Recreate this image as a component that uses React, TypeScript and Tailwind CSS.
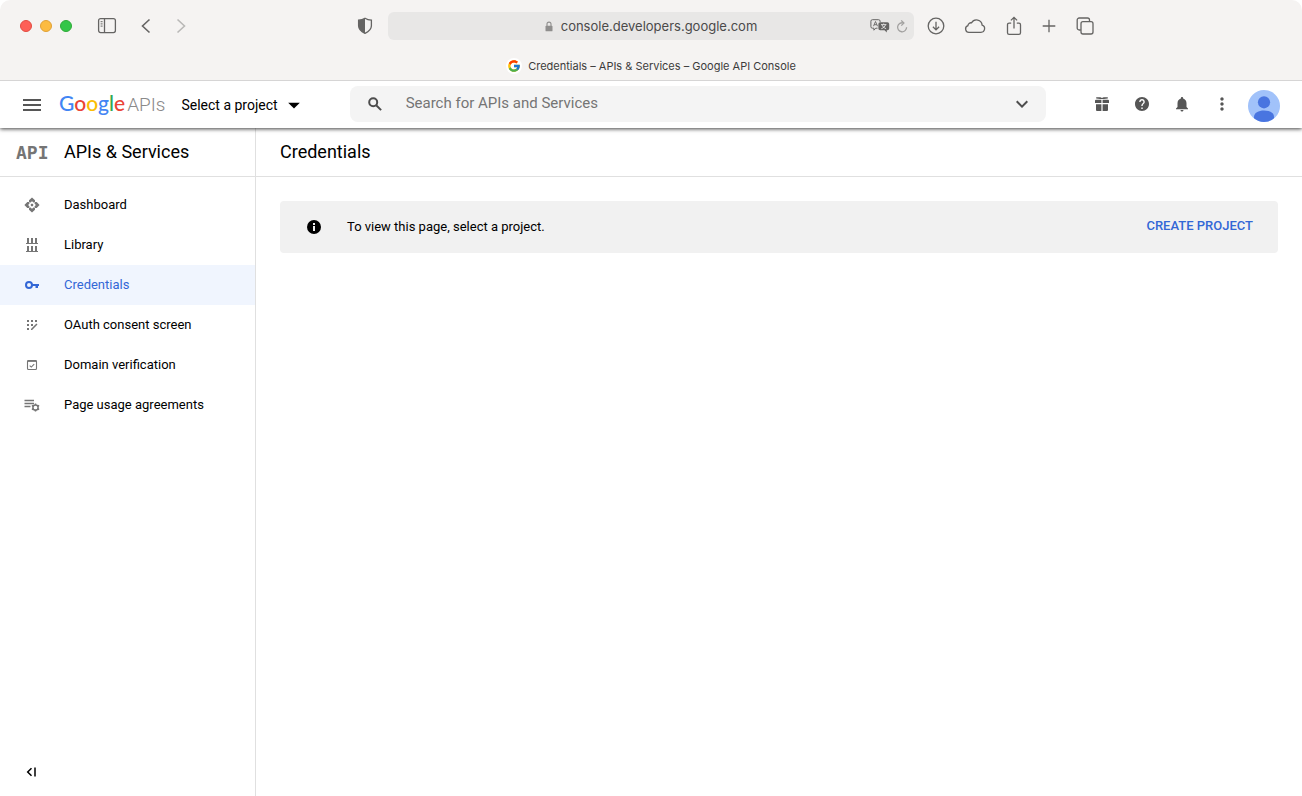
import React from "react";
import { FcGoogle } from "react-icons/fc";
import { MdArrowDropDown, MdExpandMore, MdMoreVert, MdNotifications } from "react-icons/md";

function SidebarIcon() {
  return (
    <svg width="20" height="18" viewBox="0 0 20 18" fill="none" stroke="currentColor" strokeWidth="1.3" aria-hidden="true">
      <rect x="1.6" y="1.6" width="16.8" height="14" rx="2" />
      <path d="M7.5 1.6v14" />
      <path d="M3.6 4.7h2M3.6 6.9h2M3.6 9.1h2" strokeWidth="1" />
    </svg>
  );
}

function ShieldIcon() {
  return (
    <svg width="16" height="18" viewBox="0 0 16 18" aria-hidden="true">
      <path d="M8 1.2c1.900 1.200 3.900 1.800 6.400 2v5.600c0 3.400-2.300 5.600-6.400 7.500-4.100-1.900-6.400-4.100-6.400-7.500V3.200c2.500-.2 4.500-.8 6.400-2z" fill="none" stroke="currentColor" strokeWidth="1.300" />
      <path d="M8 1.200v15.100c-4.100-1.900-6.400-4.100-6.400-7.500V3.200c2.500-.2 4.500-.8 6.400-2z" fill="currentColor" />
    </svg>
  );
}

function LockIcon() {
  return (
    <svg width="8" height="11" viewBox="0 0 8 11" aria-hidden="true">
      <rect x="0.500" y="4.700" width="7" height="5.600" rx="0.900" fill="currentColor" />
      <path d="M2 5V3.100a2 2 0 0 1 4 0V5" fill="none" stroke="currentColor" strokeWidth="1.100" />
    </svg>
  );
}

function TranslateIcon() {
  return (
    <svg width="20" height="14" viewBox="0 0 20 14" fill="none" aria-hidden="true">
      <path d="M7.500 9.200H5.800L3.900 11.200V9.200H2.400A1.500 1.500 0 0 1 .9 7.700V2.200A1.500 1.500 0 0 1 2.400.7h6.200a1.500 1.500 0 0 1 1.500 1.500v.8" stroke="currentColor" strokeWidth="1" />
      <path d="M3.500 7.200 5.500 2.500l2 4.700M4.200 5.700h2.600" stroke="currentColor" strokeWidth=".9" />
      <path d="M10.200 3.200h7.200a1.800 1.800 0 0 1 1.800 1.800v4.400a1.800 1.800 0 0 1-1.800 1.800h-.6v2.200l-2.300-2.200h-4.300a1.800 1.800 0 0 1-1.800-1.800V5a1.800 1.800 0 0 1 1.800-1.800z" fill="currentColor" />
      <path d="M11 5.600h5.400M13.700 4.500v1.100M15.500 5.700c-.5 1.900-2 3.300-4.200 4M12 5.900c.6 1.600 2 3 4.100 3.800" stroke="#e8e7e6" strokeWidth=".9" />
    </svg>
  );
}

function ReloadIcon() {
  return (
    <svg width="12" height="14" viewBox="0 0 12 14" fill="none" stroke="currentColor" strokeWidth="1.300" aria-hidden="true">
      <path d="M7.500 4A4.500 4.500 0 1 0 10.600 8.300" />
      <path d="M5.200 1.400l2.700 2.600-2.600 2.600" />
    </svg>
  );
}

function DownloadIcon() {
  return (
    <svg width="18" height="18" viewBox="0 0 18 18" fill="none" stroke="currentColor" strokeWidth="1.300" aria-hidden="true">
      <circle cx="9" cy="9" r="7.800" />
      <path d="M9 4.800v8M5.900 9.800 9 12.900l3.100-3.100" />
    </svg>
  );
}

function CloudIcon() {
  return (
    <svg width="22" height="16" viewBox="0 0 22 16" fill="none" stroke="currentColor" strokeWidth="1.300" aria-hidden="true">
      <path d="M5.300 14.300h11.500a3.700 3.700 0 0 0 1.300-7.200 5.600 5.600 0 0 0-10.500-2.300 3.100 3.100 0 0 0-3.700 2.900A3.400 3.400 0 0 0 5.300 14.300z" />
    </svg>
  );
}

function ShareIcon() {
  return (
    <svg width="16" height="20" viewBox="0 0 16 20" fill="none" stroke="currentColor" strokeWidth="1.300" aria-hidden="true">
      <path d="M5.200 7.100H3.100a1.600 1.600 0 0 0-1.600 1.600v8a1.600 1.600 0 0 0 1.600 1.600h9.800a1.600 1.600 0 0 0 1.600-1.600v-8a1.600 1.600 0 0 0-1.600-1.600h-2.100" />
      <path d="M8 12.500V1.500M4.900 4.400 8 1.300l3.100 3.100" />
    </svg>
  );
}

function PlusIcon() {
  return (
    <svg width="14" height="14" viewBox="0 0 14 14" fill="none" stroke="currentColor" strokeWidth="1.300" aria-hidden="true">
      <path d="M7 .7v12.600M.7 7h12.600" />
    </svg>
  );
}

function TabsIcon() {
  return (
    <svg width="18" height="18" viewBox="0 0 18 18" fill="none" stroke="currentColor" strokeWidth="1.300" aria-hidden="true">
      <path d="M4.800 13H3.200a2 2 0 0 1-2-2V3a2 2 0 0 1 2-2h8.300a2 2 0 0 1 2 2v1.500" />
      <rect x="5" y="4.700" width="12" height="12.300" rx="2" />
    </svg>
  );
}

function ChevronIcon({ flip }: { flip?: boolean }) {
  return (
    <svg width="10" height="16" viewBox="0 0 10 16" fill="none" stroke="currentColor" strokeWidth="1.600" aria-hidden="true">
      <path d={flip ? "M1.500 1.500 8.500 8l-7 6.500" : "M8.500 1.500 1.500 8l7 6.500"} />
    </svg>
  );
}

function SearchIcon() {
  return (
    <svg width="14" height="14" viewBox="0 0 14 14" fill="none" stroke="currentColor" strokeWidth="2" aria-hidden="true">
      <circle cx="5.200" cy="5.200" r="4" />
      <path d="M8.200 8.200l4.900 4.900" />
    </svg>
  );
}

function HelpIcon() {
  return (
    <svg width="14" height="14" viewBox="2 2 20 20" fill="currentColor" aria-hidden="true">
      <path d="M12 2C6.480 2 2 6.480 2 12s4.480 10 10 10 10-4.480 10-10S17.520 2 12 2zm1 17h-2v-2h2v2zm2.070-7.750-.9.920C13.450 12.900 13 13.500 13 15h-2v-.5c0-1.100.45-2.100 1.170-2.830l1.240-1.260c.37-.36.59-.86.59-1.410 0-1.100-.9-2-2-2s-2 .9-2 2H8c0-2.210 1.790-4 4-4s4 1.790 4 4c0 .88-.36 1.680-.93 2.250z" />
    </svg>
  );
}

function InfoIcon() {
  return (
    <svg width="14" height="14" viewBox="0 0 14 14" aria-hidden="true">
      <circle cx="7" cy="7" r="7" fill="currentColor" />
      <path d="M6 3h2v2H6zM6 6h2v5H6z" fill="#f1f1f1" />
    </svg>
  );
}

function GiftIcon() {
  return (
    <svg width="14" height="14" viewBox="0 0 14 14" fill="currentColor" aria-hidden="true">
      <path d="M1.200 0.300h4.200L7 1.100 8.600.3h4.200v1.200L8.900 1.900H5.100L1.200 1.500z" />
      <path d="M1 2.700h5.400v3.400H0V3.700a1 1 0 0 1 1-1zM7.600 2.700H13a1 1 0 0 1 1 1v2.400H7.600zM1 7.300h5.400V14H2a1 1 0 0 1-1-1zM7.600 7.300H13V13a1 1 0 0 1-1 1H7.600z" />
    </svg>
  );
}

function DashboardIcon() {
  const arm = "M8 .4l3 2.900v1.400l-1.100 1.100L8 4.200 6.100 5.800 5 4.700V3.300z";
  return (
    <svg width="16" height="16" viewBox="0 0 16 16" fill="currentColor" aria-hidden="true">
      <path d={arm} />
      <path d={arm} transform="rotate(90 8 8)" />
      <path d={arm} transform="rotate(180 8 8)" />
      <path d={arm} transform="rotate(270 8 8)" />
      <rect x="6.800" y="6.800" width="2.400" height="2.400" rx="0.600" />
    </svg>
  );
}

function LibraryIcon() {
  return (
    <svg width="12" height="14" viewBox="0 0 12 14" fill="currentColor" aria-hidden="true">
      <path d="M0 5h12v1H0zM0 13h12v1H0zM1 0h2v5H1zM5 0h2v5H5zM9 0h2v5H9zM1 8h2v5H1zM5 8h2v5H5zM9 8h2v5H9z" />
    </svg>
  );
}

function KeyIcon() {
  return (
    <svg width="14" height="8" viewBox="0 0 14 8" aria-hidden="true">
      <circle cx="4" cy="4" r="3" fill="none" stroke="currentColor" strokeWidth="2" />
      <path d="M7 3h7v2h-1v2h-2.500V5H7z" fill="currentColor" />
    </svg>
  );
}

function ConsentIcon() {
  return (
    <svg width="12" height="12" viewBox="0 0 12 12" fill="currentColor" aria-hidden="true">
      <path d="M1 1h2v2H1zM5 1h2v2H5zM9 1h2v2H9zM1 5h2v2H1zM5 5h2v2H5zM1 9h2v2H1zM5 9.900 10.400 4.500l1.100 1.100L6.100 11H5z" />
    </svg>
  );
}

function DomainIcon() {
  return (
    <svg width="12" height="12" viewBox="0 0 12 12" fill="none" stroke="currentColor" aria-hidden="true">
      <rect x="1.500" y="1.500" width="9" height="9" rx="1" strokeWidth="1.100" />
      <path d="M1.500 2h9" strokeWidth="1.800" />
      <path d="M3.700 6.600 5.300 8.100l2.900-3" strokeWidth="1.100" />
    </svg>
  );
}

function AgreementsIcon() {
  return (
    <svg width="16" height="14" viewBox="0 0 16 14" fill="none" stroke="currentColor" aria-hidden="true">
      <path d="M.5 2.500h9.500M.5 5.500h9.500M.5 8.500h6" strokeWidth="1.400" />
      <circle cx="11.500" cy="9.500" r="2.600" strokeWidth="1.500" />
      <path d="M11.500 5.400v1.500M11.500 12.100v1.500M7.900 7.400l1.400.9M13.700 10.700l1.400.9M7.900 11.600l1.400-.9M13.700 8.300l1.400-.9" strokeWidth="1.500" />
    </svg>
  );
}

function CollapseIcon() {
  return (
    <svg width="10" height="10" viewBox="0 0 10 10" fill="none" stroke="currentColor" strokeWidth="1.500" aria-hidden="true">
      <path d="M5.500 1.200 1.700 5l3.800 3.800M9 .5v9" />
    </svg>
  );
}

function Avatar() {
  return (
    <svg width="32" height="32" viewBox="0 0 32 32" aria-hidden="true">
      <circle cx="16" cy="16" r="16" fill="#a1c2fa" />
      <circle cx="16" cy="12.300" r="6.100" fill="#4975e0" />
      <path d="M6 28.300v-1.500c0-4 4.500-6.300 10-6.300s10 2.300 10 6.300v1.500A16 16 0 0 1 16 32 16 16 0 0 1 6 28.300z" fill="#4975e0" />
    </svg>
  );
}

function IconButton({ label, className, children }: { label: string; className: string; children: React.ReactNode }) {
  return (
    <button type="button" aria-label={label} className={`flex shrink-0 items-center justify-center ${className}`}>
      {children}
    </button>
  );
}

function BrowserChrome() {
  return (
    <div className="relative z-20 rounded-t-[10px] border-b border-[#d6d5d5] bg-[#f5f3f2] text-[#656463]">
      <div className="grid grid-cols-[1fr_minmax(0,526px)_1fr] items-center pt-3">
        <div className="flex items-center pl-5 pr-[15px]">
          <div className="flex gap-2">
            <button type="button" aria-label="Close" className="size-3 rounded-full border border-[#e24b41] bg-[#fe5f57]" />
            <button type="button" aria-label="Minimize" className="size-3 rounded-full border border-[#e0a136] bg-[#fcbb40]" />
            <button type="button" aria-label="Zoom" className="size-3 rounded-full border border-[#2fab38] bg-[#34c648]" />
          </div>
          <IconButton label="Show sidebar" className="ml-[23px] h-7 w-6"><SidebarIcon /></IconButton>
          <IconButton label="Back" className="ml-[15px] h-7 w-6"><ChevronIcon /></IconButton>
          <IconButton label="Forward" className="ml-[11px] h-7 w-6 text-[#b9b8b7]"><ChevronIcon flip /></IconButton>
          <IconButton label="Privacy report" className="ml-auto h-7 w-4"><ShieldIcon /></IconButton>
        </div>
        <div className="grid h-7 grid-cols-[1fr_auto_1fr] items-center rounded-md bg-[#e8e7e6]">
          <a href="https://console.developers.google.com" className="col-start-2 flex items-center gap-2 font-['Inter',sans-serif] text-[13px] leading-5 text-[#4b4a4a]">
            <span className="text-[#8f8e8d]"><LockIcon /></span>
            console.developers.google.com
          </a>
          <div className="flex items-center justify-end gap-[6px] pr-[6px]">
            <IconButton label="Translate" className="h-5 w-5"><TranslateIcon /></IconButton>
            <IconButton label="Reload" className="h-5 w-3 text-[#a2a1a0]"><ReloadIcon /></IconButton>
          </div>
        </div>
        <div className="flex items-center gap-3 pl-[10px]">
          <IconButton label="Downloads" className="h-7 w-6"><DownloadIcon /></IconButton>
          <IconButton label="iCloud tabs" className="ml-[3px] h-7 w-6"><CloudIcon /></IconButton>
          <IconButton label="Share" className="ml-[3px] h-7 w-6"><ShareIcon /></IconButton>
          <IconButton label="New tab" className="-ml-px h-7 w-6"><PlusIcon /></IconButton>
          <IconButton label="Tab overview" className="h-7 w-6"><TabsIcon /></IconButton>
        </div>
      </div>
      <div className="mt-3 flex h-7 items-center justify-center gap-[6px] font-['Inter',sans-serif] text-[11px] text-[#3c3b3b]">
        <span className="flex size-4 items-center justify-center rounded-full bg-white"><FcGoogle size={14} /></span>
        Credentials – APIs &amp; Services – Google API Console
      </div>
    </div>
  );
}

function ConsoleHeader() {
  return (
    <header className="relative z-10 flex h-[47px] items-center bg-white pl-5 pr-[22px] shadow-[0_1px_4px_rgba(0,0,0,0.75)]">
      <IconButton label="Main menu" className="size-6 text-[#565656]">
        <svg width="18" height="12" viewBox="0 0 18 12" fill="currentColor" aria-hidden="true">
          <path d="M0 0h18v2H0zM0 5h18v2H0zM0 10h18v2H0z" />
        </svg>
      </IconButton>
      <a href="#home" className="ml-[15px] flex items-baseline gap-[2px] pb-[2px] font-['Lato',sans-serif] text-[21px] leading-6">
        <span className="font-medium">
          <span className="text-[#4285f4]">G</span>
          <span className="text-[#ea4335]">o</span>
          <span className="text-[#fbbc05]">o</span>
          <span className="text-[#4285f4]">g</span>
          <span className="text-[#34a853]">l</span>
          <span className="text-[#ea4335]">e</span>
        </span>
        <span className="font-['Roboto',sans-serif] text-[19px] font-light text-[#8a8a8a]">APIs</span>
      </a>
      <button type="button" className="ml-4 flex items-center text-[14px] leading-5 text-black">
        Select a project
        <MdArrowDropDown size={28} className="ml-[2px]" />
      </button>
      <label className="mb-[2px] ml-[42px] mr-9 flex h-9 min-w-0 flex-1 items-center rounded-lg bg-[#f4f4f4] pl-[18px] pr-4 text-[#4d4d4d]">
        <SearchIcon />
        <input
          type="search"
          aria-label="Search for APIs and Services"
          placeholder="Search for APIs and Services"
          className="ml-6 min-w-0 flex-1 bg-transparent pb-[2px] text-[15px] leading-5 outline-none placeholder:text-[#757575]"
        />
        <MdExpandMore size={24} className="-mr-1" />
      </label>
      <div className="flex items-center pb-[2px] text-[#565656]">
        <IconButton label="Free trial" className="size-10"><GiftIcon /></IconButton>
        <IconButton label="Help" className="size-10"><HelpIcon /></IconButton>
        <IconButton label="Notifications" className="size-10"><MdNotifications size={18} /></IconButton>
        <IconButton label="More options" className="size-10"><MdMoreVert size={20} /></IconButton>
        <IconButton label="Account" className="ml-[6px] mt-1 size-8"><Avatar /></IconButton>
      </div>
    </header>
  );
}

const navItems = [
  { label: "Dashboard", icon: <DashboardIcon /> },
  { label: "Library", icon: <LibraryIcon /> },
  { label: "Credentials", icon: <KeyIcon />, active: true },
  { label: "OAuth consent screen", icon: <ConsentIcon /> },
  { label: "Domain verification", icon: <DomainIcon /> },
  { label: "Page usage agreements", icon: <AgreementsIcon /> },
];

function Sidebar() {
  return (
    <aside className="flex w-64 shrink-0 flex-col border-r border-[#e0e0e0]">
      <div className="flex h-[49px] items-center border-b border-[#e0e0e0] px-4">
        <span className="w-12 font-['DejaVu_Sans_Mono',monospace] text-[18px] font-bold text-[#757575]">API</span>
        <h2 className="text-[18px] leading-6 text-black">APIs &amp; Services</h2>
      </div>
      <nav className="flex flex-col pt-2">
        {navItems.map((item) => (
          <a
            key={item.label}
            href="#nav"
            aria-current={item.active ? "page" : undefined}
            className={`flex h-10 items-center text-[13px] ${item.active ? "bg-[#f0f5fe] text-[#3367d6]" : "text-black"}`}
          >
            <span className={`flex w-16 items-center justify-center ${item.active ? "" : "text-[#757575]"}`}>{item.icon}</span>
            {item.label}
          </a>
        ))}
      </nav>
      <IconButton label="Collapse menu" className="mb-3 ml-[19px] mt-auto size-6 text-black"><CollapseIcon /></IconButton>
    </aside>
  );
}

export default function App() {
  return (
    <div className="flex min-h-screen flex-col bg-white font-['Roboto',sans-serif]">
      <BrowserChrome />
      <ConsoleHeader />
      <div className="flex flex-1">
        <Sidebar />
        <main className="min-w-0 flex-1">
          <div className="flex h-[49px] items-center border-b border-[#e0e0e0] px-6">
            <h1 className="text-[18px] leading-6 text-black">Credentials</h1>
          </div>
          <div className="m-6 flex h-[52px] items-center rounded-sm bg-[#f1f1f1] pl-[27px] pr-[25px] text-[13px] text-black">
            <InfoIcon />
            <p className="ml-[26px]">To view this page, select a project.</p>
            <button type="button" className="ml-auto pb-[2px] font-medium text-[#3367d6]">CREATE PROJECT</button>
          </div>
        </main>
      </div>
    </div>
  );
}
